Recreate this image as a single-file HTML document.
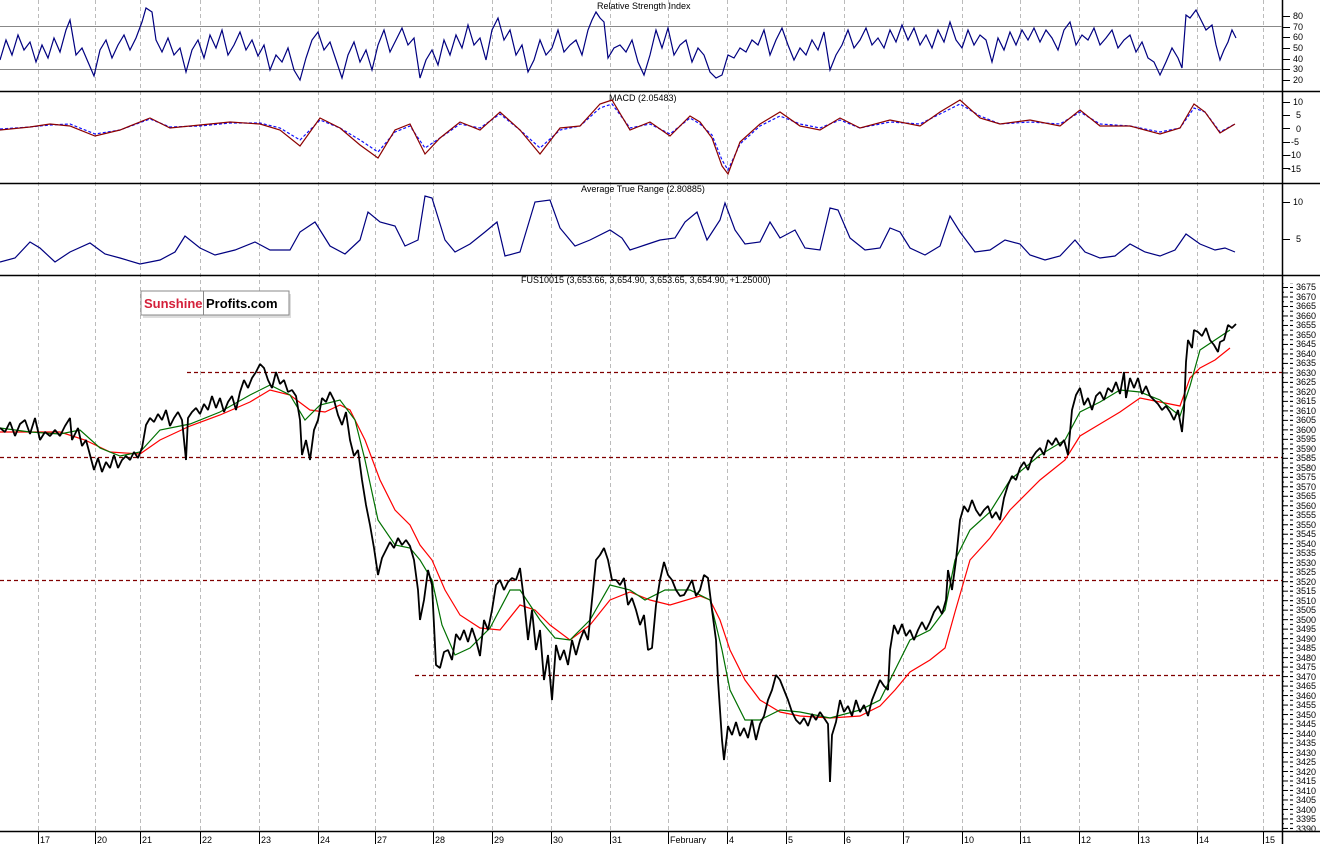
<!DOCTYPE html>
<html><head><meta charset="utf-8"><style>
html,body{margin:0;padding:0;background:#fff;}
body{width:1320px;height:844px;overflow:hidden;font-family:"Liberation Sans",Arial,sans-serif;}
svg text{font-family:"Liberation Sans",Arial,sans-serif;font-size:9px;fill:#000;}
</style></head><body>
<svg width="1320" height="844" viewBox="0 0 1320 844" xmlns="http://www.w3.org/2000/svg">
<defs>
<pattern id="tk" x="0" y="287" width="10" height="9.49" patternUnits="userSpaceOnUse"><line x1="0" y1="0.5" x2="8" y2="0.5" stroke="#000"/></pattern>
<pattern id="tk2" x="0" y="287" width="10" height="4.745" patternUnits="userSpaceOnUse"><line x1="0" y1="0.5" x2="4" y2="0.5" stroke="#000"/></pattern>
</defs>
<rect width="1320" height="844" fill="#fff"/>
<g stroke="#bbb" stroke-dasharray="4,3" stroke-width="1">
<line x1="38.5" y1="0" x2="38.5" y2="832"/><line x1="95.5" y1="0" x2="95.5" y2="832"/><line x1="140.5" y1="0" x2="140.5" y2="832"/><line x1="200.5" y1="0" x2="200.5" y2="832"/><line x1="259.5" y1="0" x2="259.5" y2="832"/><line x1="318.5" y1="0" x2="318.5" y2="832"/><line x1="375.5" y1="0" x2="375.5" y2="832"/><line x1="433.5" y1="0" x2="433.5" y2="832"/><line x1="492.5" y1="0" x2="492.5" y2="832"/><line x1="551.5" y1="0" x2="551.5" y2="832"/><line x1="610.5" y1="0" x2="610.5" y2="832"/><line x1="668.5" y1="0" x2="668.5" y2="832"/><line x1="727.5" y1="0" x2="727.5" y2="832"/><line x1="786.5" y1="0" x2="786.5" y2="832"/><line x1="844.5" y1="0" x2="844.5" y2="832"/><line x1="903.5" y1="0" x2="903.5" y2="832"/><line x1="962.5" y1="0" x2="962.5" y2="832"/><line x1="1020.5" y1="0" x2="1020.5" y2="832"/><line x1="1079.5" y1="0" x2="1079.5" y2="832"/><line x1="1138.5" y1="0" x2="1138.5" y2="832"/><line x1="1197.5" y1="0" x2="1197.5" y2="832"/><line x1="1263.5" y1="0" x2="1263.5" y2="832"/>
</g>
<g stroke="#000" stroke-width="1.5">
<line x1="0" y1="91.5" x2="1320" y2="91.5"/><line x1="0" y1="183.5" x2="1320" y2="183.5"/><line x1="0" y1="275.5" x2="1320" y2="275.5"/><line x1="0" y1="831.5" x2="1320" y2="831.5"/>
<line x1="1282.5" y1="0" x2="1282.5" y2="844"/>
</g>
<rect x="1283" y="283" width="10" height="548" fill="url(#tk2)"/>
<rect x="1283" y="283" width="10" height="548" fill="url(#tk)"/>
<g stroke="#000">
<line x1="1283" y1="16.5" x2="1290" y2="16.5"/><line x1="1283" y1="27.5" x2="1290" y2="27.5"/><line x1="1283" y1="37.5" x2="1290" y2="37.5"/><line x1="1283" y1="48.5" x2="1290" y2="48.5"/><line x1="1283" y1="59.5" x2="1290" y2="59.5"/><line x1="1283" y1="69.5" x2="1290" y2="69.5"/><line x1="1283" y1="80.5" x2="1290" y2="80.5"/>
<line x1="1283" y1="102.5" x2="1290" y2="102.5"/><line x1="1283" y1="115.5" x2="1290" y2="115.5"/><line x1="1283" y1="128.5" x2="1290" y2="128.5"/><line x1="1283" y1="142.5" x2="1290" y2="142.5"/><line x1="1283" y1="155.5" x2="1290" y2="155.5"/><line x1="1283" y1="168.5" x2="1290" y2="168.5"/>
<line x1="1283" y1="202.5" x2="1290" y2="202.5"/><line x1="1283" y1="239.5" x2="1290" y2="239.5"/>
</g>
<line x1="0" y1="26.5" x2="1282" y2="26.5" stroke="#888"/>
<line x1="0" y1="69.5" x2="1282" y2="69.5" stroke="#888"/>
<text x="597" y="9">Relative Strength Index</text>
<polyline fill="none" stroke="#000080" stroke-width="1.2" points="0,60 6,40 12,55 18,35 24,50 30,42 36,62 42,45 48,58 54,38 60,52 66,30 70,20 76,55 82,48 88,62 94,76 100,50 106,40 112,58 118,45 124,35 130,50 136,38 142,22 146,8 152,12 156,40 162,52 168,38 174,55 180,48 186,72 192,50 198,40 204,58 210,35 216,48 222,30 228,55 234,45 240,32 246,50 252,40 258,56 264,45 270,70 276,55 282,62 288,48 294,70 300,80 306,58 312,40 318,32 324,50 330,42 336,60 342,78 348,55 354,42 360,62 366,50 372,70 378,45 384,30 390,52 396,40 402,28 408,45 414,38 420,78 426,60 432,50 438,65 444,40 450,55 456,35 462,48 468,25 474,45 480,38 486,60 492,30 498,18 504,40 510,30 516,55 522,45 528,72 534,60 540,40 546,55 552,48 558,30 564,52 570,45 576,40 582,55 588,30 592,20 596,12 600,18 604,22 608,58 614,48 620,45 626,52 632,40 638,62 644,75 650,55 656,30 662,48 668,28 674,55 680,45 686,40 692,62 698,48 704,55 710,72 716,78 722,75 728,55 734,58 740,48 746,52 752,40 758,45 764,30 770,55 776,40 782,28 788,45 794,60 800,48 806,55 812,40 818,50 824,32 830,70 836,55 842,45 848,30 854,48 860,40 866,28 872,45 878,38 884,48 890,30 896,42 902,25 908,40 914,28 920,45 926,35 932,48 938,30 944,42 950,22 956,40 962,48 968,30 974,45 980,35 986,40 992,62 998,38 1004,50 1010,32 1016,45 1022,30 1028,40 1034,28 1040,42 1046,30 1052,38 1058,50 1064,30 1070,22 1076,45 1082,35 1088,40 1094,28 1100,45 1106,38 1112,30 1118,48 1124,40 1130,35 1136,52 1142,42 1148,58 1154,62 1160,75 1166,62 1172,48 1178,58 1182,68 1186,15 1190,18 1196,10 1200,18 1206,30 1212,25 1216,45 1220,60 1224,50 1228,42 1232,30 1236,38"/>
<text x="609" y="101">MACD (2.05483)</text>
<polyline fill="none" stroke="#1010ff" stroke-dasharray="3,2" stroke-width="1.2" points="0,129 30,127 50,125 70,124 95,134 120,130 150,119 170,127 200,126 230,123 260,123 280,128 300,140 320,120 340,128 360,140 378,152 395,132 410,126 425,148 440,138 460,124 480,128 500,114 520,130 540,148 560,130 580,126 600,108 612,104 630,128 650,124 670,134 690,118 700,124 712,135 722,160 728,170 740,144 760,126 780,116 800,124 820,128 840,120 860,128 890,122 920,124 940,114 960,104 980,116 1000,124 1030,122 1060,124 1080,112 1100,124 1130,126 1160,132 1180,128 1194,108 1205,112 1220,132 1235,124"/>
<polyline fill="none" stroke="#8b0000" stroke-width="1.2" points="0,130 30,127 50,124 70,126 95,136 120,130 150,118 170,128 200,125 230,122 260,124 280,130 300,146 320,118 340,128 360,145 378,158 395,130 410,124 425,154 440,138 460,122 480,130 500,112 520,130 540,154 560,128 580,126 600,104 612,100 630,130 650,122 670,136 690,116 700,122 712,138 722,166 728,174 740,142 760,124 780,112 800,126 820,130 840,118 860,128 890,120 920,126 940,112 960,100 980,118 1000,124 1030,120 1060,126 1080,110 1100,126 1130,126 1160,134 1180,128 1194,104 1205,112 1220,133 1235,124"/>
<text x="581" y="192">Average True Range (2.80885)</text>
<polyline fill="none" stroke="#000080" stroke-width="1.2" points="0,262 15,258 30,242 40,248 55,262 70,252 90,243 105,254 120,258 140,264 160,260 175,252 185,236 200,248 215,255 235,250 255,242 270,250 290,250 300,232 315,222 330,246 345,254 360,240 368,212 380,222 395,226 405,246 418,240 425,196 432,198 445,240 455,252 470,244 485,232 497,222 505,256 520,252 535,202 550,200 560,228 575,246 590,240 610,230 622,238 630,250 645,245 660,240 675,238 685,222 697,212 707,240 720,220 725,203 735,230 745,244 760,242 770,222 780,238 795,230 805,248 820,250 830,208 838,210 850,238 865,250 880,248 890,228 900,232 910,248 925,255 940,246 950,216 960,232 975,252 990,250 1005,240 1020,244 1030,255 1045,260 1060,256 1075,240 1085,252 1100,258 1115,256 1130,244 1145,252 1160,256 1175,250 1186,234 1200,244 1215,250 1225,248 1235,252"/>
<text x="521" y="283">FUS10015 (3,653.66, 3,654.90, 3,653.65, 3,654.90, +1.25000)</text>
<g stroke="#800000" stroke-dasharray="4,3" stroke-width="1.2">
<line x1="187" y1="372.5" x2="1282" y2="372.5"/>
<line x1="0" y1="457.5" x2="1282" y2="457.5"/>
<line x1="0" y1="580.5" x2="1282" y2="580.5"/>
<line x1="415" y1="675.5" x2="1282" y2="675.5"/>
</g>
<polyline fill="none" stroke="#ff0000" stroke-width="1.2" points="0,432 30,432 60,432 85,440 110,452 140,454 160,440 190,426 220,415 250,402 270,390 290,395 310,410 325,412 340,405 350,410 365,440 380,480 395,510 410,525 420,545 432,560 445,590 460,615 480,628 500,630 520,605 535,610 550,625 570,640 590,625 610,600 630,592 650,600 670,605 700,596 710,600 720,620 730,650 745,680 760,700 780,712 800,716 830,718 860,716 880,706 895,690 910,672 930,660 945,648 955,612 970,560 990,538 1010,510 1040,480 1065,460 1080,436 1100,424 1120,412 1140,398 1160,402 1180,406 1190,378 1200,368 1215,360 1230,348"/>
<polyline fill="none" stroke="#007000" stroke-width="1.2" points="0,428 30,432 60,434 80,430 100,448 120,456 140,452 160,430 190,424 220,412 250,395 270,385 290,395 305,420 320,405 340,400 355,420 365,460 378,520 395,545 410,548 420,560 432,580 442,625 455,655 470,648 490,628 510,590 520,590 540,620 555,638 570,640 590,620 610,585 630,590 645,600 665,590 690,590 710,600 722,650 730,690 745,720 760,720 780,710 800,712 830,718 860,710 880,700 895,670 910,640 930,630 945,610 955,560 970,530 990,512 1010,480 1040,455 1065,440 1080,412 1100,402 1120,390 1140,392 1160,400 1180,416 1190,386 1200,350 1215,340 1230,330"/>
<polyline fill="none" stroke="#000" stroke-width="1.8" stroke-linejoin="bevel" points="0,428 5,432 10,422 15,436 20,424 25,420 30,434 35,418 40,440 45,432 50,436 55,430 60,436 65,426 70,418 72,440 78,428 82,446 86,440 90,455 94,470 98,458 102,472 106,462 110,468 114,455 118,468 122,460 126,456 130,460 134,452 138,458 142,448 146,425 150,418 154,422 158,414 162,420 166,410 170,426 174,418 178,412 182,420 186,460 188,418 192,412 196,408 200,414 204,404 208,410 212,396 216,408 220,398 224,412 228,402 232,396 236,410 240,392 244,380 248,388 252,378 256,372 260,364 264,368 268,380 272,388 276,372 280,384 284,380 288,392 292,390 296,396 300,420 302,455 306,440 310,460 314,430 318,420 322,398 326,402 330,392 334,400 338,415 342,425 346,412 350,440 354,456 358,450 362,480 366,505 370,525 374,548 378,575 382,558 386,550 390,542 394,548 398,538 402,545 406,540 410,546 414,560 418,590 420,620 424,600 428,570 432,585 436,665 440,668 444,652 448,650 452,660 456,634 460,640 464,630 468,642 472,628 476,640 480,656 484,620 488,630 492,610 496,585 500,580 504,590 508,582 512,578 516,580 520,568 524,600 528,640 532,610 536,650 540,630 544,680 548,655 552,700 556,645 560,660 564,650 568,665 572,640 576,655 580,640 584,630 588,640 592,600 596,560 600,555 604,548 608,560 612,580 616,580 620,585 624,578 628,605 632,598 636,610 640,625 644,615 648,650 652,648 656,605 660,580 664,562 668,575 672,580 676,590 680,596 684,595 688,588 692,580 696,596 700,590 704,575 708,578 712,610 716,640 718,680 720,710 722,740 724,760 728,726 732,735 736,722 740,736 744,728 748,738 752,720 756,740 760,724 764,716 768,700 772,690 776,675 780,680 784,690 788,700 792,712 796,720 800,724 804,718 808,726 812,714 816,720 820,712 824,718 828,724 830,782 832,735 836,722 840,700 844,712 848,706 852,716 856,700 860,712 864,705 868,716 872,700 876,690 880,680 884,686 888,690 890,650 894,625 898,634 902,624 906,636 910,630 914,640 918,630 922,622 926,630 930,622 934,612 938,606 942,614 946,600 948,570 952,590 956,560 960,520 964,506 968,512 972,500 976,510 980,516 984,510 988,506 992,518 996,512 1000,520 1004,498 1008,485 1012,476 1016,480 1020,468 1024,462 1028,470 1032,458 1036,452 1040,448 1044,455 1048,440 1052,445 1056,438 1060,446 1064,440 1068,455 1072,410 1076,395 1080,388 1084,405 1088,398 1092,410 1096,396 1100,392 1104,400 1108,388 1112,392 1116,382 1120,394 1124,372 1126,398 1130,378 1134,388 1138,378 1142,394 1146,386 1150,396 1154,400 1158,404 1162,410 1166,406 1170,412 1174,420 1178,410 1182,432 1184,410 1186,362 1188,340 1192,348 1194,330 1198,332 1202,336 1206,328 1210,340 1214,345 1218,352 1220,342 1224,340 1228,325 1232,328 1236,324"/>
<rect x="143" y="294" width="148" height="24" fill="#ddd"/>
<rect x="141" y="291" width="148" height="24" fill="#fff" stroke="#888"/>
<line x1="203.5" y1="291" x2="203.5" y2="315" stroke="#888"/>
<text x="144" y="308" style="font-size:13px;font-weight:bold;fill:#d4203a">Sunshine</text>
<text x="206" y="308" style="font-size:13px;font-weight:bold;fill:#000">Profits.com</text>
<g style="font-size:9px">
<text x="1293" y="19">80</text><text x="1293" y="30">70</text><text x="1293" y="40">60</text><text x="1293" y="51">50</text><text x="1293" y="62">40</text><text x="1293" y="72">30</text><text x="1293" y="83">20</text>
<text x="1293" y="105">10</text><text x="1296" y="118">5</text><text x="1296" y="132">0</text><text x="1291" y="145">-5</text><text x="1288" y="158">-10</text><text x="1288" y="172">-15</text>
<text x="1293" y="205">10</text><text x="1296" y="242">5</text>
</g>
<g style="font-size:8.5px">
<text x="1296" y="290">3675</text><text x="1296" y="300">3670</text><text x="1296" y="309">3665</text><text x="1296" y="319">3660</text><text x="1296" y="328">3655</text><text x="1296" y="338">3650</text><text x="1296" y="347">3645</text><text x="1296" y="357">3640</text><text x="1296" y="366">3635</text><text x="1296" y="376">3630</text><text x="1296" y="385">3625</text><text x="1296" y="395">3620</text><text x="1296" y="404">3615</text><text x="1296" y="414">3610</text><text x="1296" y="423">3605</text><text x="1296" y="433">3600</text><text x="1296" y="442">3595</text><text x="1296" y="452">3590</text><text x="1296" y="461">3585</text><text x="1296" y="471">3580</text><text x="1296" y="480">3575</text><text x="1296" y="490">3570</text><text x="1296" y="499">3565</text><text x="1296" y="509">3560</text><text x="1296" y="518">3555</text><text x="1296" y="528">3550</text><text x="1296" y="537">3545</text><text x="1296" y="547">3540</text><text x="1296" y="556">3535</text><text x="1296" y="566">3530</text><text x="1296" y="575">3525</text><text x="1296" y="585">3520</text><text x="1296" y="594">3515</text><text x="1296" y="604">3510</text><text x="1296" y="613">3505</text><text x="1296" y="623">3500</text><text x="1296" y="632">3495</text><text x="1296" y="642">3490</text><text x="1296" y="651">3485</text><text x="1296" y="661">3480</text><text x="1296" y="670">3475</text><text x="1296" y="680">3470</text><text x="1296" y="689">3465</text><text x="1296" y="699">3460</text><text x="1296" y="708">3455</text><text x="1296" y="718">3450</text><text x="1296" y="727">3445</text><text x="1296" y="737">3440</text><text x="1296" y="746">3435</text><text x="1296" y="756">3430</text><text x="1296" y="765">3425</text><text x="1296" y="775">3420</text><text x="1296" y="784">3415</text><text x="1296" y="794">3410</text><text x="1296" y="803">3405</text><text x="1296" y="813">3400</text><text x="1296" y="822">3395</text><text x="1296" y="832">3390</text>
</g>
<g stroke="#000"><line x1="38.5" y1="832" x2="38.5" y2="844"/><line x1="95.5" y1="832" x2="95.5" y2="844"/><line x1="140.5" y1="832" x2="140.5" y2="844"/><line x1="200.5" y1="832" x2="200.5" y2="844"/><line x1="259.5" y1="832" x2="259.5" y2="844"/><line x1="318.5" y1="832" x2="318.5" y2="844"/><line x1="375.5" y1="832" x2="375.5" y2="844"/><line x1="433.5" y1="832" x2="433.5" y2="844"/><line x1="492.5" y1="832" x2="492.5" y2="844"/><line x1="551.5" y1="832" x2="551.5" y2="844"/><line x1="610.5" y1="832" x2="610.5" y2="844"/><line x1="668.5" y1="832" x2="668.5" y2="844"/><line x1="727.5" y1="832" x2="727.5" y2="844"/><line x1="786.5" y1="832" x2="786.5" y2="844"/><line x1="844.5" y1="832" x2="844.5" y2="844"/><line x1="903.5" y1="832" x2="903.5" y2="844"/><line x1="962.5" y1="832" x2="962.5" y2="844"/><line x1="1020.5" y1="832" x2="1020.5" y2="844"/><line x1="1079.5" y1="832" x2="1079.5" y2="844"/><line x1="1138.5" y1="832" x2="1138.5" y2="844"/><line x1="1197.5" y1="832" x2="1197.5" y2="844"/><line x1="1263.5" y1="832" x2="1263.5" y2="844"/></g>
<g style="font-size:9px">
<text x="40" y="843">17</text><text x="97" y="843">20</text><text x="142" y="843">21</text><text x="202" y="843">22</text><text x="261" y="843">23</text><text x="320" y="843">24</text><text x="377" y="843">27</text><text x="435" y="843">28</text><text x="494" y="843">29</text><text x="553" y="843">30</text><text x="612" y="843">31</text><text x="670" y="843">February</text><text x="729" y="843">4</text><text x="788" y="843">5</text><text x="846" y="843">6</text><text x="905" y="843">7</text><text x="964" y="843">10</text><text x="1022" y="843">11</text><text x="1081" y="843">12</text><text x="1140" y="843">13</text><text x="1199" y="843">14</text><text x="1265" y="843">15</text>
</g>
</svg>
</body></html>
